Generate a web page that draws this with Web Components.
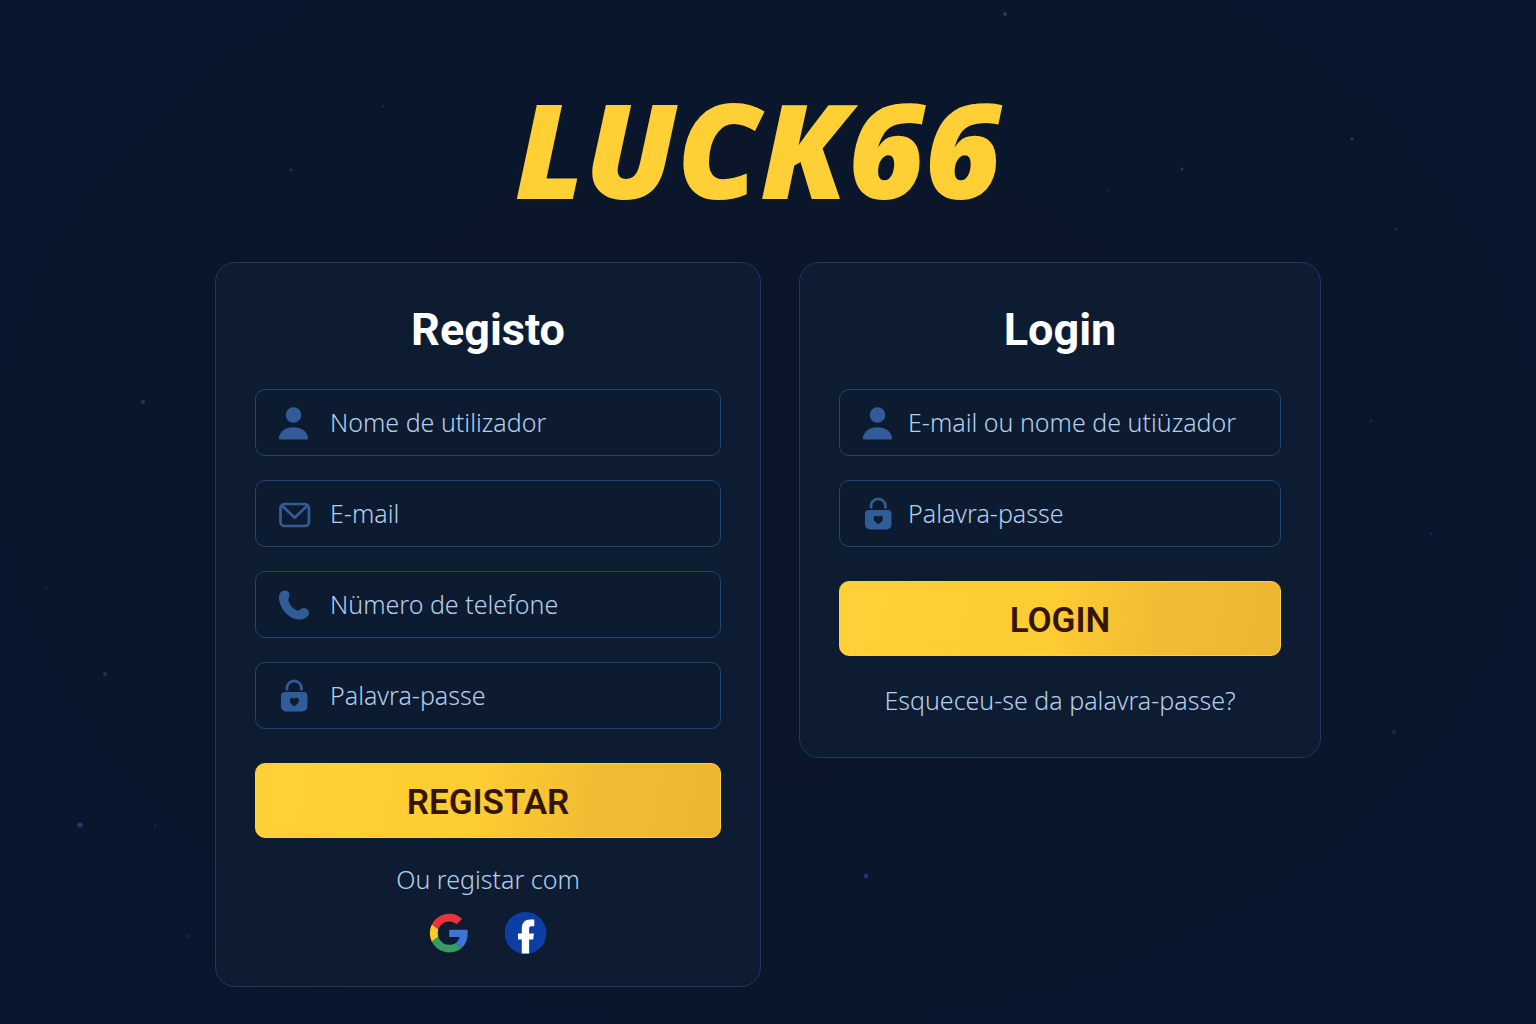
<!DOCTYPE html>
<html lang="pt">
<head>
  <meta charset="UTF-8">
  <meta name="viewport" content="width=device-width, initial-scale=1">
  <title>LUCK66</title>
  <style>
    * { box-sizing: border-box; }

    body {
      margin: 0;
      min-height: 100vh;
      color: #b4cfee;
      font-family: "Noto Sans", "Open Sans", sans-serif;
      background: radial-gradient(ellipse at 50% 45%, #0b162a 0%, #0a162b 60%, #09152e 100%);
    }
  </style>
</head>
<body>
  <luck-page>
    <luck-card heading="Registo">
      <luck-field icon="user" name="username" label="Nome de utilizador"></luck-field>
      <luck-field icon="mail" type="email" name="email" label="E-mail"></luck-field>
      <luck-field icon="phone" type="tel" name="phone" label="Nümero de telefone"></luck-field>
      <luck-field icon="lock" type="password" name="password" label="Palavra-passe"></luck-field>
      <luck-button slot="action">REGISTAR</luck-button>
      <luck-social slot="footer">Ou registar com</luck-social>
    </luck-card>

    <luck-card heading="Login" class="login">
      <luck-field icon="user" name="identity" label="E-mail ou nome de utiüzador"></luck-field>
      <luck-field icon="lock" type="password" name="login-password" label="Palavra-passe"></luck-field>
      <luck-button slot="action">LOGIN</luck-button>
      <luck-link slot="footer" href="#recover">Esqueceu-se da palavra-passe?</luck-link>
    </luck-card>
  </luck-page>

  <script>
    const ICONS = {
      user: `
        <circle cx="15.5" cy="10" r="7.8" fill="currentColor"/>
        <path fill="currentColor" d="M.9 32.4C2.1 26.4 7.600 22.3 15.500 22.3s13.300 4.100 14.500 10.100c.2 1.300-.5 2.100-1.800 2.100H2.700c-1.300 0-2-.8-1.800-2.100z"/>`,
      mail: `
        <rect x="2.5" y="8" width="28.4" height="22" rx="4" fill="none" stroke="currentColor" stroke-width="2.7"/>
        <path d="M4 9.5l12.7 12.3L29.4 9.5" fill="none" stroke="currentColor" stroke-width="2.7" stroke-linejoin="round"/>`,
      phone: `
        <path fill="currentColor" d="M4.8 4c3-1.4 6.2.2 6.7 3.2.5 2.6-1.9 4.3-1 6.800 1.500 4.500 5 8 8.500 9.500 2.500 1 3.500-2.500 6.500-2.500 3.700 0 6.200 3 5.200 6.200-1 3.300-5.200 5.300-9.700 5.300C10 32 1.500 21 1 11c0-3.200.9-5.900 3.800-7z"/>`,
      lock: `
        <path d="M9 12.500V10a7.200 7.200 0 0 1 14.400 0v2.500" fill="none" stroke="currentColor" stroke-width="2.7"/>
        <path fill="currentColor" fill-rule="evenodd" d="M7 14h18.500a4 4 0 0 1 4 4v10.500a5 5 0 0 1-5 5H8a5 5 0 0 1-5-5V18a4 4 0 0 1 4-4zm9.300 14.300c2.600-1.600 4.600-3.500 4.600-6.100 0-3-3.400-3.200-4.600-1.300-1.200-1.900-4.600-1.700-4.600 1.300 0 2.600 2 4.500 4.600 6.100z"/>`
    };

    // Page shell: starry backdrop, title and the two columns
    class LuckPage extends HTMLElement {
      constructor() {
        super();
        this.attachShadow({ mode: "open" }).innerHTML = `
          <style>
            :host {
              display: block;
              position: relative;
              min-height: 100vh;
              padding: 82px 24px 36px;
              box-sizing: border-box;
            }

            .stars {
              position: absolute;
              inset: 0;
              width: 100%;
              height: 100%;
              pointer-events: none;
              fill: #21396d;
            }

            h1 {
              margin: 0 0 48px;
              padding-right: 20px;
              color: #ffd036;
              font: italic 800 132px/132px "Open Sans", "Noto Sans", sans-serif;
              text-align: center;
            }

            main {
              position: relative;
              display: grid;
              grid-template-columns: minmax(0, 546fr) minmax(0, 522fr);
              gap: 38px;
              align-items: start;
              max-width: 1106px;
              margin: 0 auto;
            }

            @media (max-width: 860px) {
              h1 { font-size: 72px; line-height: 80px; }
              main { grid-template-columns: minmax(0, 1fr); }
            }
          </style>

          <svg class="stars" viewBox="0 0 1536 1024" preserveAspectRatio="xMidYMid slice" aria-hidden="true">
            <circle cx="1005" cy="14" r="2"/>
            <circle cx="1182" cy="169" r="1.5"/>
            <circle cx="1352" cy="139" r="1.5"/>
            <circle cx="1396" cy="229" r="1.5" opacity=".6"/>
            <circle cx="291" cy="170" r="1.5" opacity=".7"/>
            <circle cx="383" cy="106" r="1.5" opacity=".5"/>
            <circle cx="143" cy="402" r="2"/>
            <circle cx="105" cy="674" r="2" opacity=".8"/>
            <circle cx="80" cy="825" r="2.6"/>
            <circle cx="155" cy="826" r="1.5" opacity=".4"/>
            <circle cx="187" cy="936" r="1.5" opacity=".5"/>
            <circle cx="46" cy="588" r="1.5" opacity=".4"/>
            <circle cx="866" cy="876" r="2.2"/>
            <circle cx="1394" cy="732" r="2" opacity=".6"/>
            <circle cx="1431" cy="534" r="1.5" opacity=".6"/>
            <circle cx="1371" cy="421" r="1.5" opacity=".5"/>
            <circle cx="1108" cy="190" r="1.5" opacity=".4"/>
          </svg>

          <h1>LUCK66</h1>
          <main><slot></slot></main>
        `;
      }
    }

    class LuckCard extends HTMLElement {
      constructor() {
        super();
        this.attachShadow({ mode: "open" }).innerHTML = `
          <style>
            :host {
              --field-gap: 20px;
              display: block;
              box-sizing: border-box;
              padding: 37px 39px 32px;
              background: #0e1c32;
              border: 1px solid #1e3960;
              border-radius: 20px;
            }

            :host(.login) { --field-gap: 14px; }

            h2 {
              margin: 0 0 29px;
              color: #fff;
              font: 700 45px/60px Roboto, "Noto Sans", sans-serif;
              text-align: center;
            }

            form {
              display: flex;
              flex-direction: column;
            }

            .fields {
              display: flex;
              flex-direction: column;
              gap: 24px;
              margin-bottom: 34px;
            }
          </style>

          <form>
            <h2></h2>
            <div class="fields"><slot></slot></div>
            <slot name="action"></slot>
            <slot name="footer"></slot>
          </form>
        `;
      }

      connectedCallback() {
        this.shadowRoot.querySelector("h2").textContent = this.getAttribute("heading");
        this.shadowRoot.querySelector("form").addEventListener("submit", e => e.preventDefault());
      }
    }

    class LuckField extends HTMLElement {
      constructor() {
        super();
        this.attachShadow({ mode: "open" }).innerHTML = `
          <style>
            :host { display: block; }

            label {
              display: flex;
              align-items: center;
              gap: var(--field-gap, 20px);
              box-sizing: border-box;
              height: 67px;
              padding: 0 22px;
              background: #0d1b30;
              border: 1px solid #23436f;
              border-radius: 10px;
              cursor: text;
            }

            label:focus-within { border-color: #3a6bb0; }

            svg {
              flex: none;
              width: 32px;
              height: 36px;
              color: #325c98;
              overflow: visible;
            }

            input {
              flex: 1;
              min-width: 0;
              height: 38px;
              margin-bottom: 2px;
              padding: 0;
              border: 0;
              outline: 0;
              background: none;
              color: inherit;
              font: 350 25px/38px "Noto Sans", sans-serif;
            }

            input::placeholder {
              color: inherit;
              opacity: 1;
            }
          </style>

          <label>
            <svg viewBox="0 0 32 36" aria-hidden="true"></svg>
            <input>
          </label>
        `;
      }

      connectedCallback() {
        const input = this.shadowRoot.querySelector("input");
        input.type = this.getAttribute("type") || "text";
        input.name = this.getAttribute("name");
        input.placeholder = this.getAttribute("label");
        input.setAttribute("aria-label", this.getAttribute("label"));
        this.shadowRoot.querySelector("svg").innerHTML = ICONS[this.getAttribute("icon")];
      }
    }

    class LuckButton extends HTMLElement {
      constructor() {
        super();
        this.attachShadow({ mode: "open" }).innerHTML = `
          <style>
            :host { display: block; }

            button {
              display: block;
              width: 100%;
              height: 75px;
              padding: 4px 0 0;
              border: 1px solid #fbd04c;
              border-radius: 10px;
              background: linear-gradient(100deg, #ffd038 0%, #fecc33 48%, #f1bc33 72%, #edb630 100%) border-box;
              color: #341503;
              font: 600 35px/44px Roboto, "Noto Sans", sans-serif;
              cursor: pointer;
            }

            button:hover { filter: brightness(1.05); }
          </style>

          <button type="submit"><slot></slot></button>
        `;
      }
    }

    class LuckSocial extends HTMLElement {
      constructor() {
        super();
        this.attachShadow({ mode: "open" }).innerHTML = `
          <style>
            :host {
              display: block;
              margin-top: 25px;
              text-align: center;
            }

            p {
              margin: 0 0 17px;
              font: 350 25px/32px "Noto Sans", sans-serif;
            }

            div {
              display: flex;
              justify-content: center;
              gap: 34px;
            }

            button {
              width: 42px;
              height: 42px;
              padding: 0;
              border: 0;
              border-radius: 50%;
              background: none;
              cursor: pointer;
            }

            svg {
              display: block;
              width: 42px;
              height: 42px;
            }
          </style>

          <p><slot></slot></p>
          <div>
            <button type="button" aria-label="Google">
              <svg viewBox="0 0 48 48" aria-hidden="true">
                <g transform="translate(1 2) scale(.92)">
                  <path fill="#ea343c" d="M24 9.500c3.540 0 6.710 1.220 9.210 3.600l6.850-6.850C35.900 2.380 30.470 0 24 0 14.620 0 6.510 5.380 2.560 13.220l7.980 6.190C12.430 13.720 17.740 9.500 24 9.500z"/>
                  <path fill="#fccb25" d="M10.530 28.590c-.48-1.450-.76-2.990-.76-4.590s.27-3.140.76-4.590l-7.980-6.190C.920 16.460 0 20.120 0 24c0 3.880.92 7.540 2.560 10.780l7.970-6.190z"/>
                  <path fill="#3a9a63" d="M24 48c6.480 0 11.930-2.130 15.890-5.810l-7.730-6c-2.150 1.450-4.920 2.300-8.160 2.300-6.260 0-11.570-4.220-13.470-9.910l-7.980 6.190C6.510 42.620 14.620 48 24 48z"/>
                  <path fill="#3f74d8" d="M46.980 24.550c0-1.570-.15-3.090-.38-4.550H24v9.020h12.940c-.58 2.960-2.260 5.480-4.780 7.180l7.730 6c4.510-4.180 7.090-10.360 7.090-17.650z"/>
                </g>
              </svg>
            </button>
            <button type="button" aria-label="Facebook">
              <svg viewBox="0 0 42 42" aria-hidden="true">
                <circle cx="20.500" cy="21" r="21" fill="#0c3ea3"/>
                <path fill="#fff" d="M16.800 41.500V27.400H13v-6h3.800v-4.600c0-6 3.200-9.200 8.700-9.200h3.800v6.700h-2.600c-2 0-2.600.9-2.600 2.700v4.400h4.800l-.7 6h-4.100v14.100z"/>
              </svg>
            </button>
          </div>
        `;
      }
    }

    class LuckLink extends HTMLElement {
      constructor() {
        super();
        this.attachShadow({ mode: "open" }).innerHTML = `
          <style>
            :host {
              display: block;
              margin: 28px 0 9px;
              text-align: center;
            }

            a {
              display: block;
              color: inherit;
              font: 350 25px/32px "Noto Sans", sans-serif;
              text-decoration: none;
            }

            a:hover { text-decoration: underline; }
          </style>

          <a><slot></slot></a>
        `;
      }

      connectedCallback() {
        this.shadowRoot.querySelector("a").href = this.getAttribute("href");
      }
    }

    customElements.define("luck-page", LuckPage);
    customElements.define("luck-card", LuckCard);
    customElements.define("luck-field", LuckField);
    customElements.define("luck-button", LuckButton);
    customElements.define("luck-social", LuckSocial);
    customElements.define("luck-link", LuckLink);
  </script>
</body>
</html>
